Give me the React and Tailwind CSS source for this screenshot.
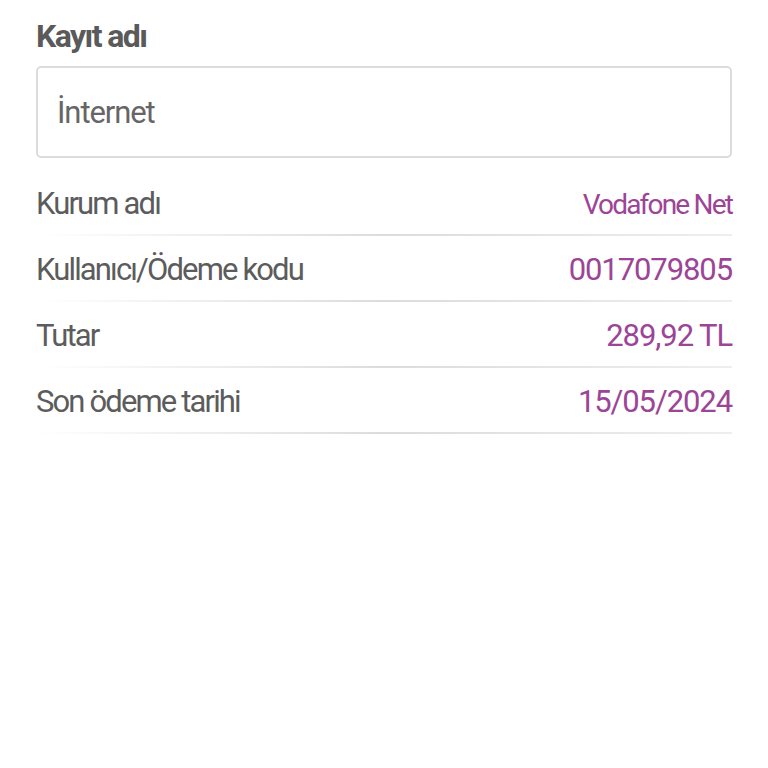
import React from 'react';

const rows = [
  { label: 'Kurum adı', value: 'Vodafone Net', small: true },
  { label: 'Kullanıcı/Ödeme kodu', value: '0017079805' },
  { label: 'Tutar', value: '289,92 TL' },
  { label: 'Son ödeme tarihi', value: '15/05/2024' },
];

export default function App() {
  return (
    <div className="min-h-[768px] bg-white px-9 pt-[18px] font-['Roboto',sans-serif]">
      {/* Record name */}
      <h2 className="text-[32px] leading-9 font-bold tracking-[-0.05em] text-[#5a5a5a]">Kayıt adı</h2>
      <div className="mt-[12px] h-[92px] rounded-[5px] border-2 border-[#dcdcdc] flex items-center px-[19px] pt-[3px]">
        <span className="text-[31px] tracking-[-0.035em] text-[#666666]">İnternet</span>
      </div>

      {/* Detail rows */}
      <div className="mt-[12px]">
        {rows.map((row) => (
          <div key={row.label}>
            <div className="h-[64px] flex items-center justify-between pt-[5px]">
              <span className="text-[31px] tracking-[-0.06em] text-[#5c5c5c]">{row.label}</span>
              <span
                className={`text-[#9c4596] ${
                  row.small ? 'text-[28px] tracking-[-0.065em]' : 'text-[31px] tracking-[-0.035em]'
                }`}
              >
                {row.value}
              </span>
            </div>
            <div className="h-[2px] bg-gradient-to-r from-white via-[#dcdcdc] to-[#eeeeee]" />
          </div>
        ))}
      </div>
    </div>
  );
}
